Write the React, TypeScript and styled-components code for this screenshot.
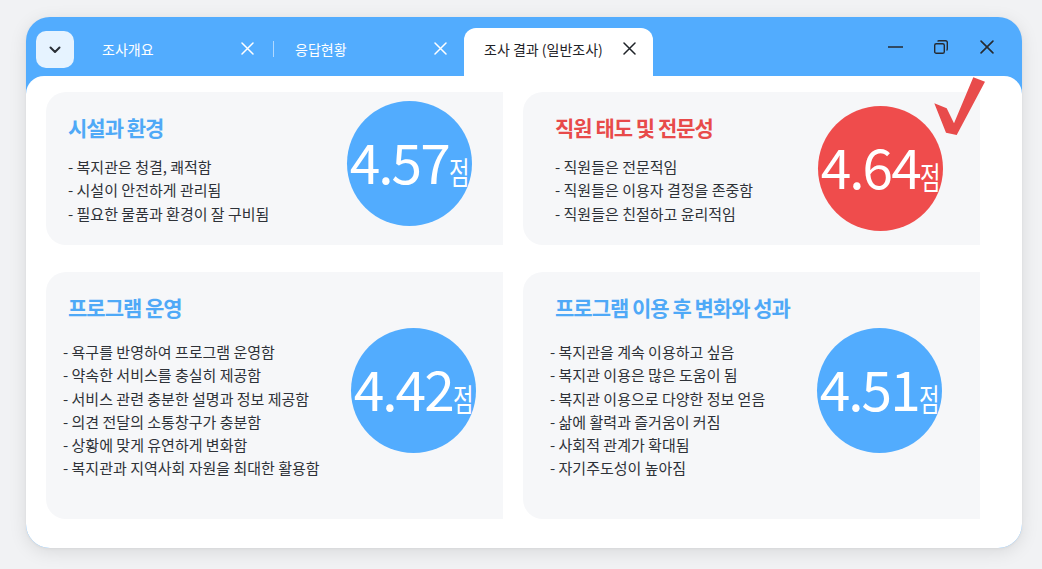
import styled, { createGlobalStyle } from 'styled-components'

const GlobalStyle = createGlobalStyle`
  html, body {
    margin: 0;
    padding: 0;
  }
  body {
    background: #f1f2f4;
    font-family: 'Noto Sans CJK KR', 'Noto Sans', sans-serif;
  }
`

const Page = styled.div`
  width: 1042px;
  height: 569px;
  padding: 17px 0 0 26px;
  box-sizing: border-box;
`

const Window = styled.div`
  width: 996px;
  height: 531px;
  border-radius: 24px;
  background: #52acfe;
  box-shadow: 0 4px 18px rgba(0, 0, 0, 0.1), 0 1px 3px rgba(0, 0, 0, 0.05);
  overflow: hidden;
  display: flex;
  flex-direction: column;
`

const TitleBar = styled.div`
  height: 59px;
  flex-shrink: 0;
  display: flex;
  align-items: flex-end;
  padding-left: 10px;
`

const MenuButton = styled.div`
  align-self: flex-start;
  margin-top: 14px;
  width: 38px;
  height: 37px;
  border-radius: 10px;
  background: #e6f3ff;
  display: flex;
  align-items: center;
  justify-content: center;
  color: #2a2f36;
`

const Tab = styled.div<{ $active?: boolean }>`
  width: 189px;
  height: 48px;
  box-sizing: border-box;
  padding: 0 17px 7px 20px;
  display: flex;
  align-items: center;
  justify-content: space-between;
  font-size: 14px;
  color: ${(p) => (p.$active ? '#1f2328' : '#ffffff')};
  background: ${(p) => (p.$active ? '#ffffff' : 'transparent')};
  border-radius: 12px 12px 0 0;
`

const TabList = styled.div`
  display: flex;
  align-items: flex-end;
  margin-left: 8px;
`

const TabDivider = styled.div`
  width: 1px;
  height: 16px;
  margin: 0 1px 19px 2px;
  background: rgba(255, 255, 255, 0.55);
`

const Controls = styled.div`
  align-self: flex-start;
  margin: 15px 12px 0 auto;
  display: flex;
  color: #262a30;
`

const ControlButton = styled.div`
  width: 46px;
  height: 30px;
  display: flex;
  align-items: center;
  justify-content: center;
`

const Content = styled.div`
  flex: 1;
  background: #ffffff;
  border-radius: 18px 18px 0 0;
  display: grid;
  grid-template-columns: 457px 457px;
  grid-template-rows: 153px 247px;
  column-gap: 20px;
  row-gap: 27px;
  padding: 16px 0 0 20px;
`

const Card = styled.div<{ $padLeft: number }>`
  position: relative;
  background: #f6f7f9;
  border-radius: 20px 0 0 20px;
  display: flex;
  align-items: center;
  padding-left: ${(p) => p.$padLeft}px;
`

const TextBlock = styled.div`
  align-self: flex-start;
  padding-top: 23px;
`

const Title = styled.div<{ $color: string }>`
  font-size: 21px;
  font-weight: 700;
  line-height: 24px;
  letter-spacing: -1px;
  color: ${(p) => p.$color};
`

const List = styled.ul<{ $gap: number; $indent: number }>`
  list-style: none;
  margin: ${(p) => p.$gap}px 0 0 ${(p) => p.$indent}px;
  padding: 0;
`

const Item = styled.li`
  font-size: 15px;
  line-height: 23.3px;
  color: #2e3238;
  white-space: nowrap;
`

const Circle = styled.div<{ $color: string; $right: number; $lift: number }>`
  flex-shrink: 0;
  width: 125px;
  height: 125px;
  border-radius: 50%;
  background: ${(p) => p.$color};
  margin-left: auto;
  margin-right: ${(p) => p.$right}px;
  margin-bottom: ${(p) => p.$lift}px;
  display: flex;
  align-items: center;
  justify-content: center;
`

const Score = styled.div`
  display: flex;
  align-items: baseline;
  color: #ffffff;
  white-space: nowrap;
  padding-bottom: 6px;
`

const Number = styled.span`
  font-size: 55px;
  font-weight: 400;
  line-height: 1;
  letter-spacing: -2px;
`

const Unit = styled.span`
  display: inline-block;
  font-size: 31px;
  line-height: 1;
  transform: scaleX(0.72);
  transform-origin: left center;
  margin-right: -8px;
`

const Check = styled.svg`
  position: absolute;
  left: 408px;
  top: -18px;
`

const CloseIcon = ({ size = 13 }: { size?: number }) => (
  <svg width={size} height={size} viewBox="0 0 13 13" fill="none">
    <path d="M1 1L12 12M12 1L1 12" stroke="currentColor" strokeWidth="1.5" strokeLinecap="round" />
  </svg>
)

const BLUE = '#52acfe'
const BLUE_TEXT = '#4fa9f7'
const RED = '#ef4c4c'

type Section = {
  title: string
  items: string[]
  score: string
  color: string
  titleColor: string
  padLeft: number
  gap: number
  indent: number
  right: number
  lift: number
  check?: boolean
}

const sections: Section[] = [
  {
    title: '시설과 환경',
    items: ['- 복지관은 청결, 쾌적함', '- 시설이 안전하게 관리됨', '- 필요한 물품과 환경이 잘 구비됨'],
    score: '4.57',
    color: BLUE,
    titleColor: BLUE_TEXT,
    padLeft: 22,
    gap: 16,
    indent: 0,
    right: 31,
    lift: 11,
  },
  {
    title: '직원 태도 및 전문성',
    items: ['- 직원들은 전문적임', '- 직원들은 이용자 결정을 존중함', '- 직원들은 친절하고 윤리적임'],
    score: '4.64',
    color: RED,
    titleColor: '#e84a4a',
    padLeft: 32,
    gap: 16,
    indent: 0,
    right: 37,
    lift: 0,
    check: true,
  },
  {
    title: '프로그램 운영',
    items: [
      '- 욕구를 반영하여 프로그램 운영함',
      '- 약속한 서비스를 충실히 제공함',
      '- 서비스 관련 충분한 설명과 정보 제공함',
      '- 의견 전달의 소통창구가 충분함',
      '- 상황에 맞게 유연하게 변화함',
      '- 복지관과 지역사회 자원을 최대한 활용함',
    ],
    score: '4.42',
    color: BLUE,
    titleColor: BLUE_TEXT,
    padLeft: 22,
    gap: 21,
    indent: -5,
    right: 27,
    lift: 11,
  },
  {
    title: '프로그램 이용 후 변화와 성과',
    items: [
      '- 복지관을 계속 이용하고 싶음',
      '- 복지관 이용은 많은 도움이 됨',
      '- 복지관 이용으로 다양한 정보 얻음',
      '- 삶에 활력과 즐거움이 커짐',
      '- 사회적 관계가 확대됨',
      '- 자기주도성이 높아짐',
    ],
    score: '4.51',
    color: BLUE,
    titleColor: BLUE_TEXT,
    padLeft: 32,
    gap: 21,
    indent: -5,
    right: 38,
    lift: 11,
  },
]

export default function App() {
  return (
    <Page>
      <GlobalStyle />
      <Window>
        <TitleBar>
          <MenuButton>
            <svg width="12" height="8" viewBox="0 0 12 8" fill="none">
              <path d="M1.5 1.5L6 6L10.5 1.5" stroke="currentColor" strokeWidth="2" strokeLinecap="round" strokeLinejoin="round" />
            </svg>
          </MenuButton>
          <TabList>
            <Tab>
              <span>조사개요</span>
              <CloseIcon />
            </Tab>
            <TabDivider />
            <Tab>
              <span>응답현황</span>
              <CloseIcon />
            </Tab>
            <Tab $active>
              <span>조사 결과 (일반조사)</span>
              <CloseIcon />
            </Tab>
          </TabList>
          <Controls>
            <ControlButton>
              <svg width="15" height="2" viewBox="0 0 15 2">
                <path d="M0 1H15" stroke="currentColor" strokeWidth="1.4" />
              </svg>
            </ControlButton>
            <ControlButton>
              <svg width="14" height="14" viewBox="0 0 14 14" fill="none">
                <rect x="0.7" y="3.7" width="9.6" height="9.6" rx="1.6" stroke="currentColor" strokeWidth="1.4" />
                <path d="M3.7 1.5C3.9 1 4.4 0.7 5 0.7H11.5C12.5 0.7 13.3 1.5 13.3 2.5V9C13.3 9.6 13 10.1 12.5 10.3" stroke="currentColor" strokeWidth="1.4" />
              </svg>
            </ControlButton>
            <ControlButton>
              <CloseIcon size={14} />
            </ControlButton>
          </Controls>
        </TitleBar>
        <Content>
          {sections.map((s) => (
            <Card key={s.title} $padLeft={s.padLeft}>
              <TextBlock>
                <Title $color={s.titleColor}>{s.title}</Title>
                <List $gap={s.gap} $indent={s.indent}>
                  {s.items.map((it) => (
                    <Item key={it}>{it}</Item>
                  ))}
                </List>
              </TextBlock>
              <Circle $color={s.color} $right={s.right} $lift={s.lift}>
                <Score>
                  <Number>{s.score}</Number>
                  <Unit>점</Unit>
                </Score>
              </Circle>
              {s.check && (
                <Check width="60" height="64" viewBox="0 0 60 64">
                  <polygon
                    points="3.3,29.3 15.7,34.3 23,49.3 42.3,3.3 54,7.7 25.7,61 15,58.7"
                    fill="#e84b4b"
                  />
                </Check>
              )}
            </Card>
          ))}
        </Content>
      </Window>
    </Page>
  )
}
